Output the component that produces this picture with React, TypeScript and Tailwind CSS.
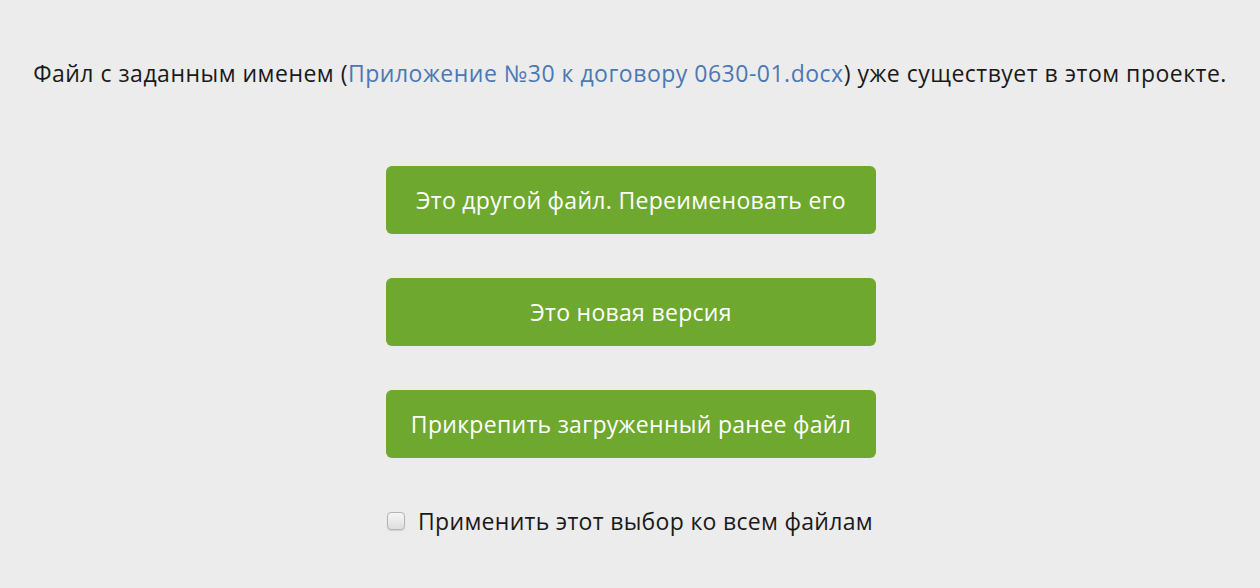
export default function App() {
  const font = { fontFamily: '"Open Sans", "Noto Sans", sans-serif' };
  return (
    <div className="w-[1260px] h-[588px] bg-[#ececec] flex flex-col items-center" style={font}>
      <p className="mt-[58px] text-[23px] leading-[30px] text-[#1a1a1a] whitespace-nowrap tracking-[0.5px]">
        Файл с заданным именем (<span className="text-[#4a78b5]">Приложение №30 к договору 0630-01.docx</span>) уже существует в этом проекте.
      </p>
      <div className="mt-[78px] pl-[2px] flex flex-col gap-[44px]">
        {['Это другой файл. Переименовать его', 'Это новая версия', 'Прикрепить загруженный ранее файл'].map((t) => (
          <button
            key={t}
            className="w-[490px] h-[68px] rounded-[6px] bg-[#6fa82f] text-white text-[23px] leading-[30px] tracking-[0.3px]"
          >
            {t}
          </button>
        ))}
      </div>
      <label className="mt-[48px] flex items-center gap-[13px] text-[23px] leading-[30px] text-[#1a1a1a] tracking-[0.3px]">
        <span className="w-[18px] h-[18px] rounded-[4px] border border-[#b4b4b4] bg-gradient-to-b from-[#f6f6f6] to-[#dedede] shadow-[0_1px_1px_rgba(0,0,0,0.12)]" />
        Применить этот выбор ко всем файлам
      </label>
    </div>
  );
}
